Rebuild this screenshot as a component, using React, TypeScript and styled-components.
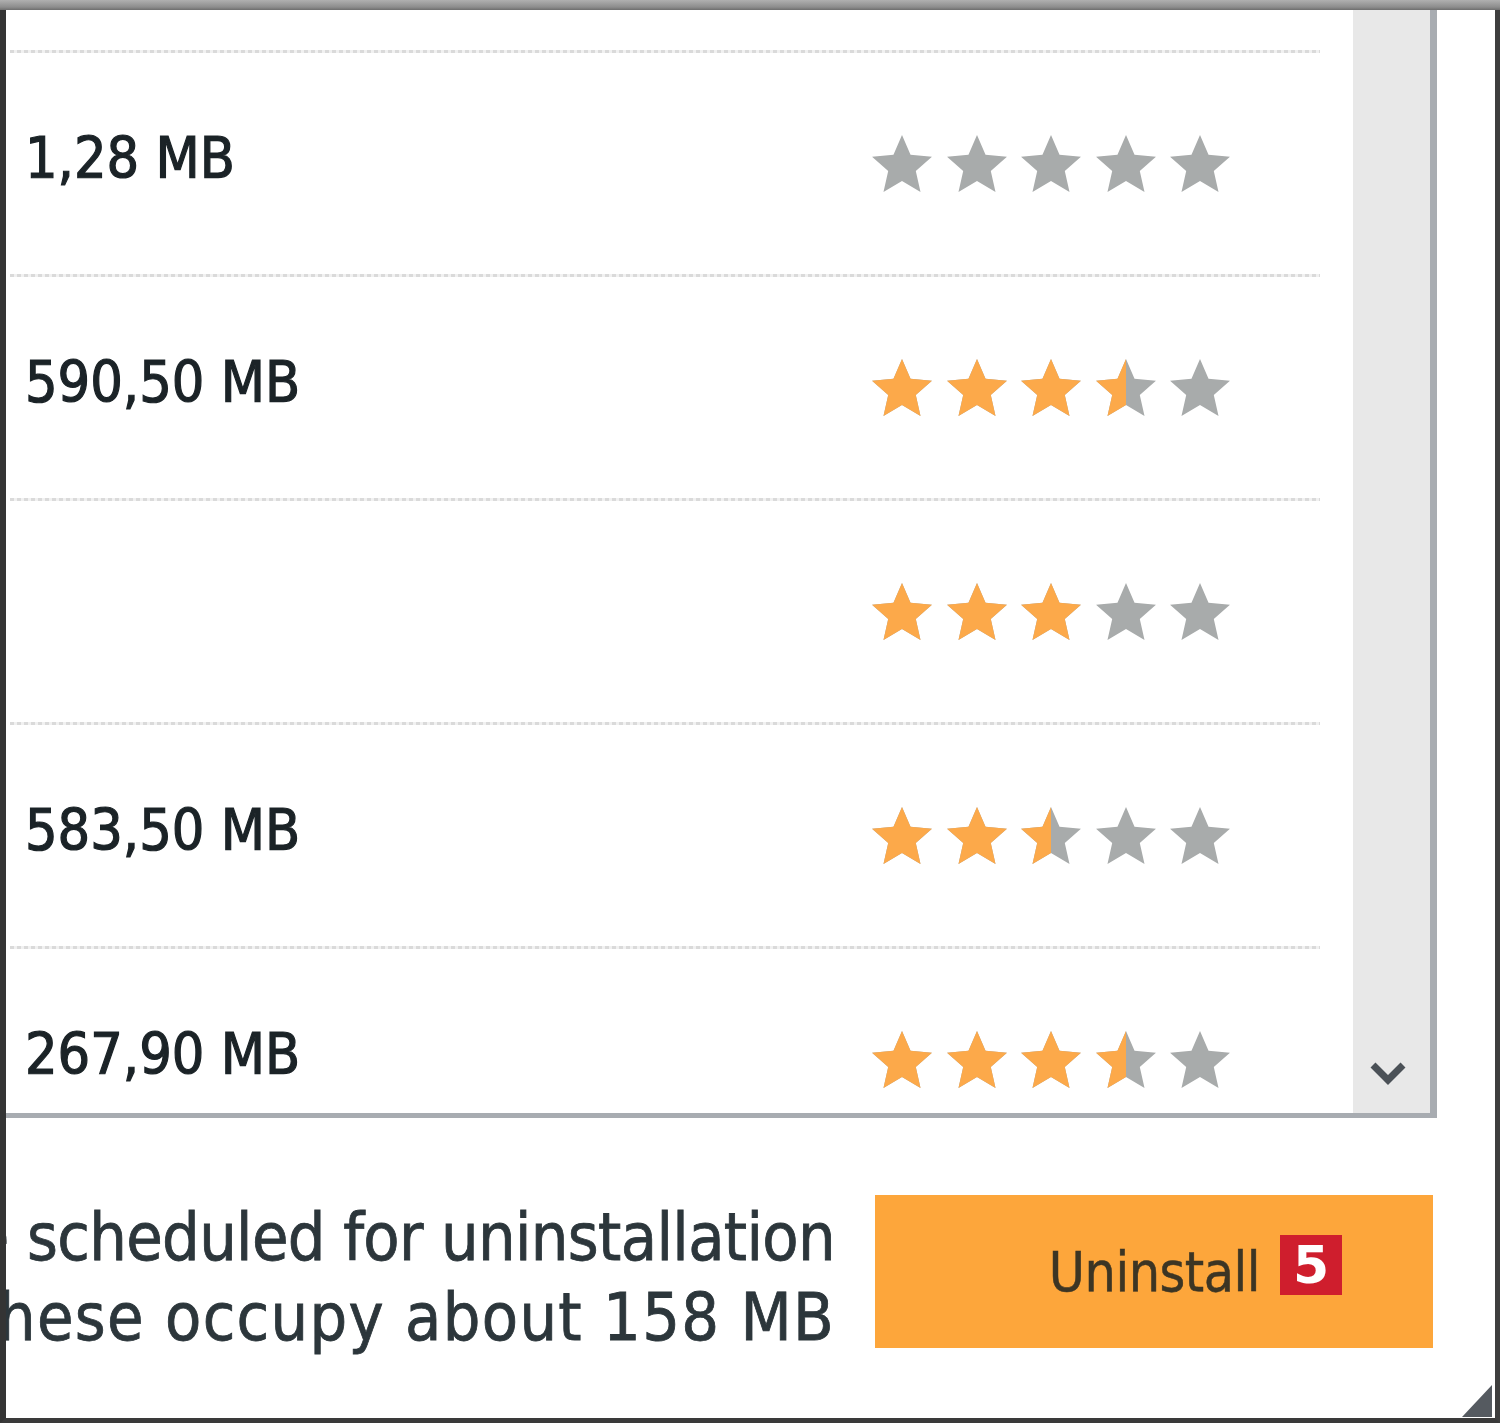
import { useId } from "react";
import styled, { createGlobalStyle } from "styled-components";

const GlobalStyle = createGlobalStyle`
  html, body {
    margin: 0;
    padding: 0;
    background: #fff;
    overflow: hidden;
  }
  body {
    font-family: "DejaVu Sans Condensed", "DejaVu Sans", sans-serif;
  }
`;

const Window = styled.div`
  position: relative;
  width: 1500px;
  height: 1423px;
  display: flex;
  flex-direction: column;
  overflow: hidden;
`;

const TitleEdge = styled.div`
  height: 10px;
  flex: none;
  background: linear-gradient(#b0b0b0, #8d8d8d 70%, #6e6e6e);
`;

const Body = styled.div`
  flex: 1;
  min-height: 0;
  display: flex;
  flex-direction: column;
  background: #fff;
  border-left: 6px solid #343434;
  border-right: 5px solid #3e3e3e;
  border-bottom: 5px solid #3a3a3a;
`;

const ListBox = styled.div`
  box-sizing: border-box;
  width: 1431px;
  height: 1108px;
  flex: none;
  display: flex;
  border-right: 7px solid #a8acb1;
  border-bottom: 5px solid #a8acb1;
`;

const Rows = styled.div`
  flex: 1;
  padding-top: 40px;
  overflow: hidden;
`;

const Row = styled.div`
  height: 224px;
  display: flex;
  flex-direction: column;
`;

const Divider = styled.div`
  height: 3px;
  flex: none;
  margin: 0 33px 0 4px;
  background: repeating-linear-gradient(90deg, #dadada 0 4px, #f1f1f1 4px 7px);
`;

const RowBody = styled.div`
  flex: 1;
  display: flex;
  align-items: center;
  padding-left: 19px;
`;

const Size = styled.div`
  width: 847px;
  flex: none;
  padding-bottom: 12px;
  font-size: 57px;
  color: #1b2327;
  -webkit-text-stroke: 1.2px #1b2327;
  white-space: nowrap;
`;

const Stars = styled.div`
  display: flex;
  gap: 14.5px;
`;

const Scrollbar = styled.div`
  box-sizing: border-box;
  width: 77px;
  flex: none;
  display: flex;
  flex-direction: column;
  justify-content: flex-end;
  align-items: center;
  padding: 0 8px 26px 0;
  background: #e8e8e8;
`;

const Footer = styled.div`
  flex: 1;
  min-height: 0;
  display: flex;
  align-items: center;
  gap: 40px;
  padding-right: 62px;
`;

const Summary = styled.div`
  flex: 1;
  min-width: 0;
  overflow: hidden;
  padding-top: 20px;
  font-size: 66px;
  line-height: 80px;
  color: #2c363b;
  -webkit-text-stroke: 0.8px #2c363b;
`;

const SummaryLine = styled.div<{ $tracking: number }>`
  display: flex;
  justify-content: flex-end;
  white-space: nowrap;
  letter-spacing: ${(p) => p.$tracking}px;
`;

const UninstallButton = styled.button`
  box-sizing: border-box;
  width: 558px;
  height: 153px;
  flex: none;
  margin-top: 7px;
  padding: 0 91px 0 0;
  border: none;
  background: #fda63b;
  display: flex;
  align-items: center;
  justify-content: flex-end;
  gap: 20px;
  font-family: inherit;
  font-size: 55px;
  letter-spacing: -0.5px;
  color: #3c3524;
  -webkit-text-stroke: 0.5px #3c3524;
`;

const Badge = styled.span`
  width: 62px;
  height: 60px;
  margin-bottom: 14px;
  display: flex;
  align-items: center;
  justify-content: center;
  background: #cf1e2d;
  color: #fff;
  -webkit-text-stroke: 0;
  font-family: "DejaVu Sans", sans-serif;
  font-weight: bold;
  font-size: 52px;
  letter-spacing: 0;
`;

const Grip = styled.div`
  position: absolute;
  right: 8px;
  bottom: 6px;
  width: 30px;
  height: 32px;
  background: #555a60;
  clip-path: polygon(100% 0, 100% 100%, 0 100%);
`;

// five-point star, outer radius 31.5, inner radius 14.5, centre (30, 31.5)
const STAR =
  "30,0 38.52,19.77 59.96,21.77 43.79,35.98 48.52,56.98 30,46 11.48,56.98 16.21,35.98 0.04,21.77 21.48,19.77";

function Star({ fill }: { fill: number }) {
  const id = useId();
  return (
    <svg width="60" height="58" viewBox="0 0 60 58">
      <defs>
        <clipPath id={id}>
          <rect x="0" y="0" width={60 * fill} height="58" />
        </clipPath>
      </defs>
      <polygon points={STAR} fill="#a8abab" />
      {fill > 0 && <polygon points={STAR} fill="#fca94a" clipPath={`url(#${id})`} />}
    </svg>
  );
}

function Rating({ value }: { value: number }) {
  return (
    <Stars>
      {[0, 1, 2, 3, 4].map((i) => (
        <Star key={i} fill={Math.max(0, Math.min(1, value - i))} />
      ))}
    </Stars>
  );
}

const programs = [
  { size: "1,28 MB", rating: 0 },
  { size: "590,50 MB", rating: 3.5 },
  { size: "", rating: 3 },
  { size: "583,50 MB", rating: 2.5 },
  { size: "267,90 MB", rating: 3.5 },
];

export default function App() {
  return (
    <>
      <GlobalStyle />
      <Window>
        <TitleEdge />
        <Body>
          <ListBox>
            <Rows>
              {programs.map((p, i) => (
                <Row key={i}>
                  <Divider />
                  <RowBody>
                    <Size>{p.size}</Size>
                    <Rating value={p.rating} />
                  </RowBody>
                </Row>
              ))}
            </Rows>
            <Scrollbar>
              <svg width="40" height="28" viewBox="0 0 40 28">
                <polyline points="5,6 20,21 35,6" fill="none" stroke="#4b5157" strokeWidth="7" />
              </svg>
            </Scrollbar>
          </ListBox>
          <Footer>
            <Summary>
              <SummaryLine $tracking={-0.65}>5 programs are scheduled for uninstallation</SummaryLine>
              <SummaryLine $tracking={1.3}>These occupy about 158 MB</SummaryLine>
            </Summary>
            <UninstallButton>
              Uninstall
              <Badge>5</Badge>
            </UninstallButton>
          </Footer>
        </Body>
        <Grip />
      </Window>
    </>
  );
}
